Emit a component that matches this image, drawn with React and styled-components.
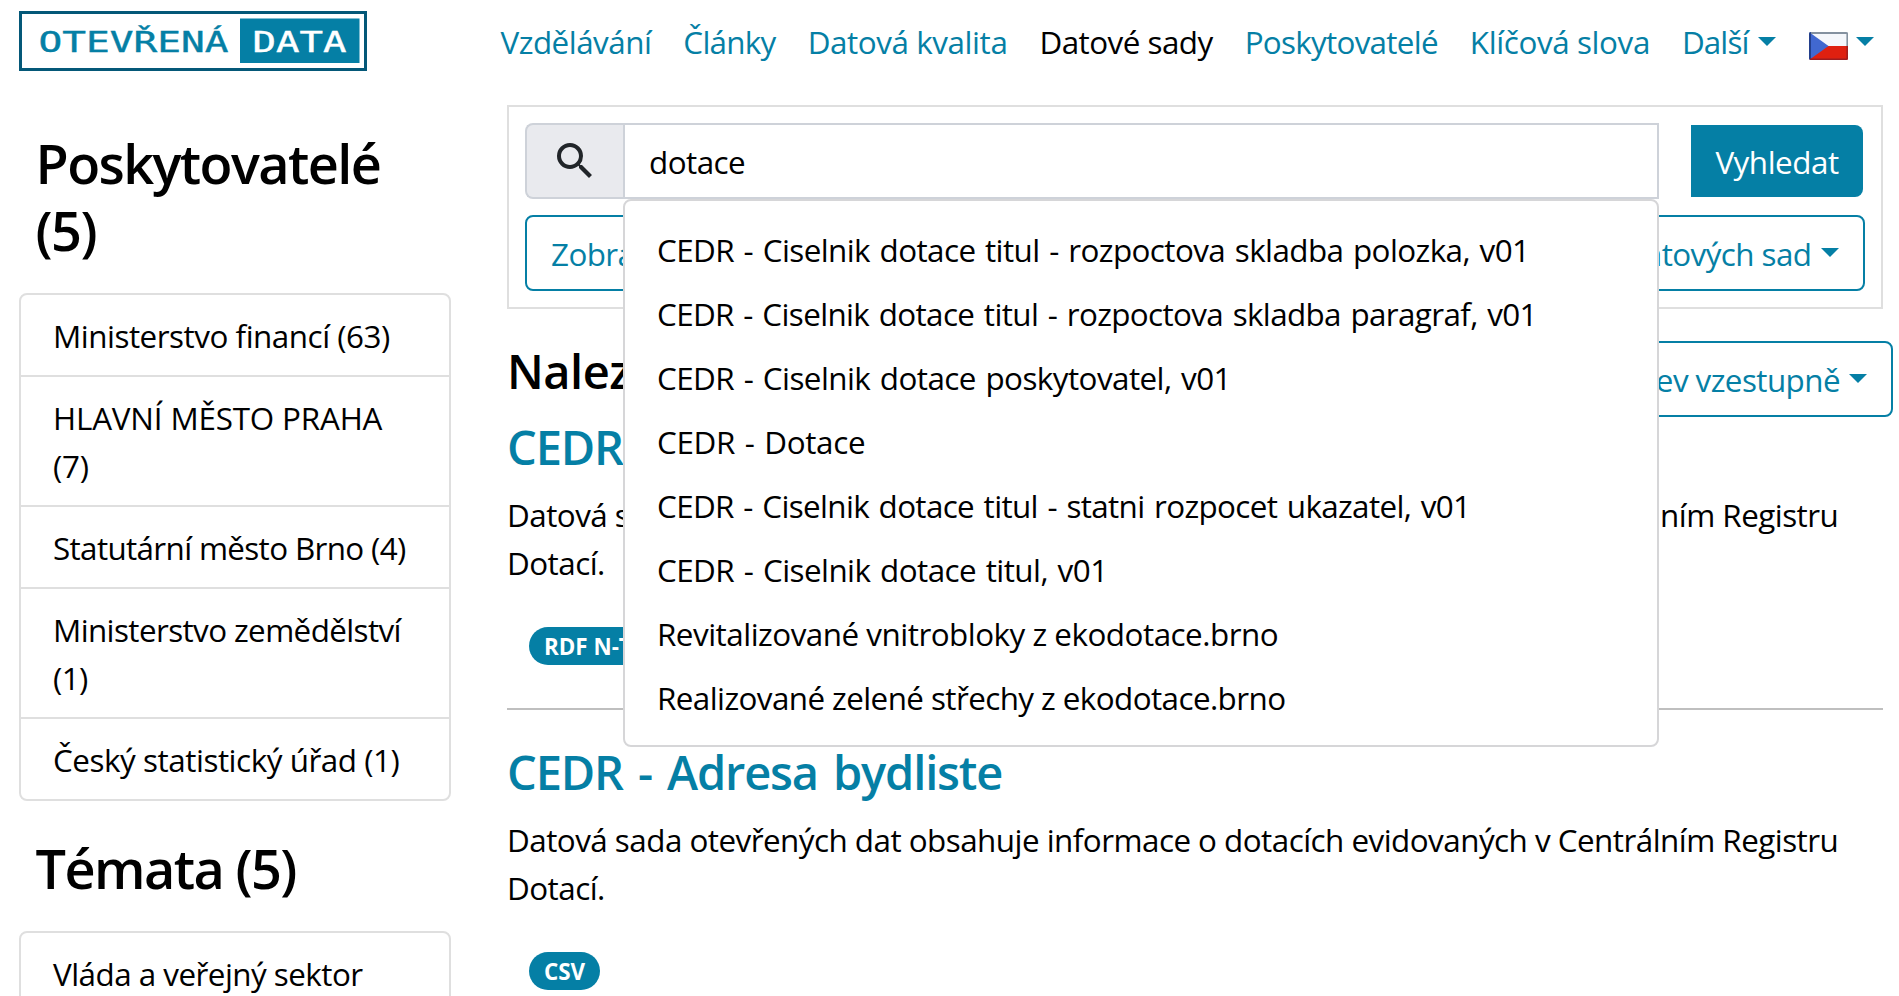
import React from "react";
import styled, { createGlobalStyle } from "styled-components";

const TEAL = "#057fa5";
const LINE = "#dfdfdf";

const GlobalStyle = createGlobalStyle`
  * { box-sizing: border-box; }
  html, body { margin: 0; background: #fff; overflow: hidden; }
  body {
    color: #000;
    font-family: "Open Sans", "Noto Sans", sans-serif;
    font-size: 31.4px;
    line-height: 48px;
  }
`;

const Page = styled.div`
  width: 1899px;
  height: 996px;
  overflow: hidden;
`;

const Header = styled.header`
  display: flex;
  align-items: flex-start;
  height: 105px;
  padding: 11px 24px 0 19px;
`;

const Logo = styled.svg`
  display: block;
  flex: none;
`;

const Nav = styled.nav`
  display: flex;
  gap: 32px;
  margin: 7px 0 0 133.5px;
`;

const NavItem = styled.a`
  display: flex;
  align-items: center;
  color: ${(p) => (p.$active ? "#000" : TEAL)};
  letter-spacing: ${(p) => p.$track || 0}px;
  white-space: nowrap;
`;

const Caret = styled.span`
  flex: none;
  margin: ${(p) => -(p.$lift || 1)}px 0 0 ${(p) => p.$gap || 8}px;
  border: 9.6px solid transparent;
  border-top-color: ${TEAL};
  border-bottom: 0;
`;

const Flag = styled.svg`
  display: block;
  margin: 8px 0 0 1px;
`;

const Columns = styled.div`
  display: flex;
  align-items: flex-start;
  gap: 56px;
  padding-left: 19px;
`;

const Sidebar = styled.aside`
  width: 432px;
  flex: none;
  padding-top: 25px;
`;

const FacetTitle = styled.h3`
  margin: 0 0 28.6px;
  padding: 0 16px 0 16.6px;
  font-size: 54px;
  font-weight: 600;
  line-height: 67.2px;
  letter-spacing: -1.6px;
`;

const FacetList = styled.ul`
  list-style: none;
  margin: 0 0 34px;
  padding: 0;
  border: 2px solid ${LINE};
  border-radius: 8px;
`;

const FacetItem = styled.li`
  padding: 17px 31px 15px 32px;
  letter-spacing: ${(p) => p.$track}px;
  & + & {
    border-top: 2px solid ${LINE};
  }
`;

const Main = styled.main`
  width: 1376px;
  flex: none;
`;

const SearchPanel = styled.section`
  display: flex;
  flex-direction: column;
  gap: 16px;
  padding: 16px;
  border: 2px solid ${LINE};
`;

const SearchRow = styled.div`
  position: relative;
  display: flex;
  align-items: center;
  padding-right: 2px;
`;

const SearchIconBox = styled.div`
  display: flex;
  align-items: center;
  justify-content: center;
  width: 98px;
  height: 76px;
  background: #e9eaee;
  border: 2px solid #ced2d9;
  border-right: 0;
  border-radius: 8px 0 0 8px;
`;

const SearchField = styled.div`
  flex: 1;
  height: 76px;
  padding: 13px 24px 11px;
  border: 2px solid #ced2d9;
  letter-spacing: -0.55px;
`;

const SubmitButton = styled.button`
  width: 172px;
  height: 72px;
  margin-left: 32px;
  padding: 2px 0 0;
  border: 0;
  border-radius: 0 8px 8px 0;
  background: ${TEAL};
  color: #fff;
  font: inherit;
  letter-spacing: -0.48px;
`;

const Suggestions = styled.ul`
  position: absolute;
  z-index: 5;
  top: 76px;
  left: 98px;
  width: 1036px;
  margin: 0;
  padding: 16px 0;
  list-style: none;
  background: #fff;
  border: 2px solid #d6d6d8;
  border-radius: 8px;
`;

const Suggestion = styled.li`
  padding: 9px 32px 7px;
  letter-spacing: ${(p) => p.$track}px;
  word-spacing: ${(p) => p.$words || 0}px;
  white-space: nowrap;
`;

const OutlineButton = styled.button`
  display: flex;
  align-items: center;
  justify-content: space-between;
  height: 76px;
  padding: 2px 24px 0;
  border: 2px solid ${TEAL};
  border-radius: 8px;
  background: #fff;
  color: ${TEAL};
  font: inherit;
  letter-spacing: -0.57px;
  white-space: nowrap;
`;

const ButtonEnd = styled.span`
  display: flex;
  align-items: center;
`;

const ResultBar = styled.div`
  display: flex;
  justify-content: space-between;
  align-items: flex-start;
  height: 76.4px;
  margin: 32px -10px 0 0;
`;

const Heading = styled.h4`
  margin: 0;
  padding-top: 2px;
  color: ${(p) => (p.$link ? TEAL : "#000")};
  font-size: 47px;
  font-weight: 600;
  line-height: 57.6px;
  letter-spacing: ${(p) => (p.$link ? -1.15 : -0.5)}px;
  word-spacing: 4px;
`;

const Dataset = styled.article`
  padding-bottom: 43px;
  & + & {
    border-top: 2px solid #bfbfbf;
    padding-top: 32px;
  }
`;

const Description = styled.p`
  margin: 14.4px 0 40px;
  letter-spacing: -0.53px;
`;

const Badges = styled.div`
  display: flex;
  gap: 8px;
  padding-left: 22px;
`;

const Badge = styled.span`
  height: 38px;
  padding: 1px 15px 0;
  border-radius: 19px;
  background: ${TEAL};
  color: #fff;
  font-size: 22.4px;
  font-weight: 700;
  line-height: 37px;
`;

const NAV = [
  ["Vzdělávání", -0.51],
  ["Články", -0.72],
  ["Datová kvalita", -0.42],
  ["Datové sady", -0.53],
  ["Poskytovatelé", -0.72],
  ["Klíčová slova", -0.39],
];

const SUGGESTIONS = [
  ["CEDR - Ciselnik dotace titul - rozpoctova skladba polozka, v01", -0.58, 2],
  ["CEDR - Ciselnik dotace titul - rozpoctova skladba paragraf, v01", -0.63, 2],
  ["CEDR - Ciselnik dotace poskytovatel, v01", -0.56, 2],
  ["CEDR - Dotace", -0.35, 2],
  ["CEDR - Ciselnik dotace titul - statni rozpocet ukazatel, v01", -0.64, 2],
  ["CEDR - Ciselnik dotace titul, v01", -0.55, 2],
  ["Revitalizované vnitrobloky z ekodotace.brno", -0.5],
  ["Realizované zelené střechy z ekodotace.brno", -0.58],
];

const PROVIDERS = [
  ["Ministerstvo financí (63)", -0.48],
  ["HLAVNÍ MĚSTO PRAHA (7)", -0.18],
  ["Statutární město Brno (4)", -0.65],
  ["Ministerstvo zemědělství (1)", -0.6],
  ["Český statistický úřad (1)", -0.46],
];

const DATASETS = [
  { title: "CEDR - Adresa", formats: ["RDF N-Triples"] },
  { title: "CEDR - Adresa bydliste", formats: ["CSV"] },
];

const ABOUT =
  "Datová sada otevřených dat obsahuje informace o dotacích evidovaných v Centrálním Registru Dotací.";

function OpenDataLogo() {
  const text = {
    fontFamily: '"DejaVu Sans Mono", monospace',
    fontSize: 28.8,
    strokeWidth: 0.4,
    lengthAdjust: "spacingAndGlyphs",
  };
  return (
    <Logo width="348" height="60" viewBox="0 0 348 60">
      <rect x="1.5" y="1.5" width="345" height="57" fill="#fff" stroke="#045878" strokeWidth="3" />
      <rect x="221" y="7.5" width="119.5" height="44.5" fill={TEAL} />
      <text x="19.5" y="40.5" textLength="190" fill={TEAL} stroke={TEAL} {...text}>OTEVŘENÁ</text>
      <text x="233.5" y="40.5" textLength="94" fill="#fff" stroke="#fff" {...text}>DATA</text>
    </Logo>
  );
}

function CzechFlag() {
  return (
    <Flag width="39" height="28" viewBox="0 0 39 28">
      <defs>
        <clipPath id="flag-shape">
          <rect width="39" height="28" rx="2" />
        </clipPath>
      </defs>
      <g clipPath="url(#flag-shape)">
        <rect width="39" height="14" fill="#f5f7fb" />
        <rect y="14" width="39" height="14" fill="#df2010" />
        <path d="M0 0L19.5 14L0 28Z" fill="#4168d0" />
        <path d="M0 1H39" stroke="#84919f" strokeWidth="2" />
        <path d="M38.2 0V14" stroke="#84919f" strokeWidth="1.6" />
        <path d="M38.2 14V28" stroke="#a31d1b" strokeWidth="1.6" />
        <path d="M1 0V28" stroke="#233f8c" strokeWidth="2" />
        <path d="M1 27.2H39" stroke="#9c1c20" strokeWidth="1.6" />
      </g>
    </Flag>
  );
}

function SearchIcon() {
  return (
    <svg width="48" height="48" viewBox="0 0 24 24" fill="#212529">
      <path d="M15.5 14h-.79l-.28-.27A6.471 6.471 0 0 0 16 9.5 6.5 6.5 0 1 0 9.5 16c1.61 0 3.09-.59 4.23-1.57l.27.28v.79l5 4.99L20.49 19l-4.99-5zm-6 0C7.01 14 5 11.99 5 9.5S7.01 5 9.5 5 14 7.01 14 9.5 11.99 14 9.5 14z" />
    </svg>
  );
}

export default function App() {
  return (
    <Page>
      <GlobalStyle />
      <Header>
        <OpenDataLogo />
        <Nav>
          {NAV.map(([label, track]) => (
            <NavItem key={label} $track={track} $active={label === "Datové sady"}>
              {label}
            </NavItem>
          ))}
          <NavItem $track={-0.9}>
            Další
            <Caret $gap={10} />
          </NavItem>
          <NavItem>
            <CzechFlag />
            <Caret />
          </NavItem>
        </Nav>
      </Header>
      <Columns>
        <Sidebar>
          <FacetTitle>Poskytovatelé (5)</FacetTitle>
          <FacetList>
            {PROVIDERS.map(([name, track]) => (
              <FacetItem key={name} $track={track}>{name}</FacetItem>
            ))}
          </FacetList>
          <FacetTitle>Témata (5)</FacetTitle>
          <FacetList>
            <FacetItem $track={-0.53}>Vláda a veřejný sektor</FacetItem>
          </FacetList>
        </Sidebar>
        <Main>
          <SearchPanel>
            <SearchRow>
              <SearchIconBox>
                <SearchIcon />
              </SearchIconBox>
              <SearchField>dotace</SearchField>
              <SubmitButton>Vyhledat</SubmitButton>
              <Suggestions>
                {SUGGESTIONS.map(([label, track, words]) => (
                  <Suggestion key={label} $track={track} $words={words}>{label}</Suggestion>
                ))}
              </Suggestions>
            </SearchRow>
            <OutlineButton>
              <span>Zobrazit</span>
              <ButtonEnd>
                datových sad
                <Caret $lift={3} $gap={9.5} />
              </ButtonEnd>
            </OutlineButton>
          </SearchPanel>
          <ResultBar>
            <Heading>Nalezeno</Heading>
            <OutlineButton>
              Název vzestupně
              <Caret $lift={3} $gap={9} />
            </OutlineButton>
          </ResultBar>
          {DATASETS.map(({ title, formats }) => (
            <Dataset key={title}>
              <Heading $link>{title}</Heading>
              <Description>{ABOUT}</Description>
              <Badges>
                {formats.map((f) => (
                  <Badge key={f}>{f}</Badge>
                ))}
              </Badges>
            </Dataset>
          ))}
        </Main>
      </Columns>
    </Page>
  );
}
